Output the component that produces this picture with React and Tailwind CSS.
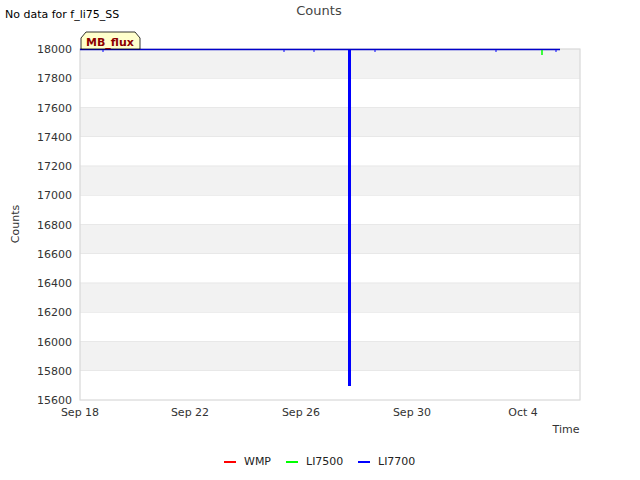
export default function App() {
  const ticks = [18000, 17800, 17600, 17400, 17200, 17000, 16800, 16600, 16400, 16200, 16000, 15800, 15600];
  const y = (v) => 49 + ((18000 - v) / 2400) * 351;
  const xt = [["Sep 18", 80], ["Sep 22", 190], ["Sep 26", 301], ["Sep 30", 412], ["Oct 4", 523]];
  return (
    <div className="w-[640px] h-[480px] bg-white relative" style={{ fontFamily: "'DejaVu Sans', sans-serif" }}>
      <svg width="640" height="480" className="absolute inset-0" fontFamily="DejaVu Sans, sans-serif">
        {ticks.slice(0, 12).map((v, i) => (
          <rect key={v} x="80" y={y(v)} width="500" height={351 / 12} fill={i % 2 === 0 ? "#f2f2f2" : "#ffffff"} stroke="#e0e0e0" strokeWidth="0.5" />
        ))}
        <rect x="80" y="49" width="500" height="351" fill="none" stroke="#d8d8d8" />
        {ticks.map((v) => (
          <text key={v} x="72" y={y(v) + 4} fontSize="11" textAnchor="end" fill="#333">{v}</text>
        ))}
        {xt.map(([l, x]) => (
          <text key={l} x={x} y="416" fontSize="11" textAnchor="middle" fill="#333">{l}</text>
        ))}
        <text x="566" y="433" fontSize="11" textAnchor="middle" fill="#333">Time</text>
        <text x="19" y="224" fontSize="11" textAnchor="middle" fill="#333" transform="rotate(-90 19 224)">Counts</text>
        <text x="319" y="15" fontSize="13" textAnchor="middle" fill="#444">Counts</text>
        <text x="5" y="18" fontSize="11" fill="#000">No data for f_li75_SS</text>
        <line x1="80" y1="49.5" x2="560" y2="49.5" stroke="#0000cc" strokeWidth="1.5" />
        {[103, 284, 314, 375, 496, 556].map((x) => (
          <line key={x} x1={x} y1="50" x2={x} y2="52" stroke="#0000ff" strokeWidth="1" />
        ))}
        <line x1="542" y1="50" x2="542" y2="55" stroke="#00ff00" strokeWidth="1.5" />
        <line x1="349.5" y1="50" x2="349.5" y2="386" stroke="#0000ff" strokeWidth="3" />
        <path d="M81 49 L81 38 L86 32 L135 32 L140 38 L140 49 Z" fill="#ffffcc" stroke="#000" strokeWidth="0.8" />
        <text x="110" y="46" fontSize="11" fontWeight="bold" textAnchor="middle" fill="#8b0000">MB_flux</text>
        <line x1="224" y1="462" x2="236" y2="462" stroke="#ff0000" strokeWidth="2" />
        <text x="244" y="465" fontSize="11" fill="#222">WMP</text>
        <line x1="286" y1="462" x2="298" y2="462" stroke="#00ff00" strokeWidth="2" />
        <text x="306" y="465" fontSize="11" fill="#222">LI7500</text>
        <line x1="358" y1="462" x2="370" y2="462" stroke="#0000ff" strokeWidth="2" />
        <text x="378" y="465" fontSize="11" fill="#222">LI7700</text>
      </svg>
    </div>
  );
}
